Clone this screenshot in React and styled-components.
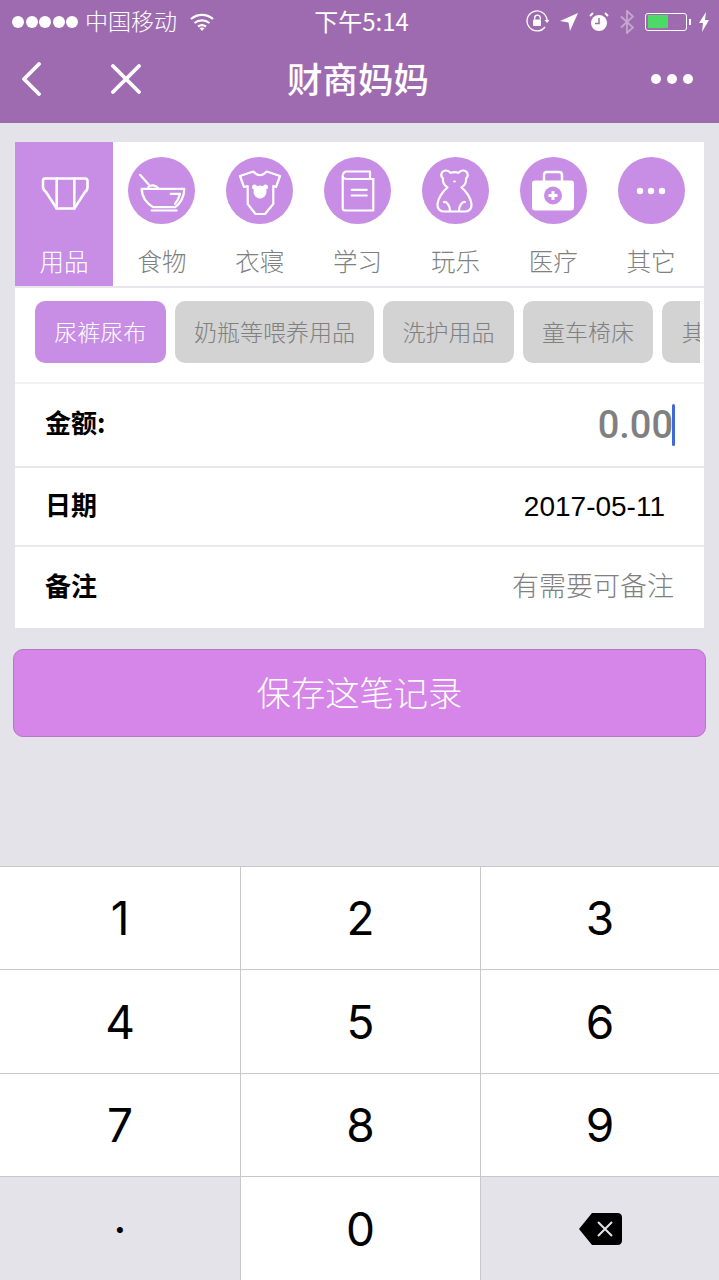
import React from "react";
import styled, { createGlobalStyle } from "styled-components";

const GlobalStyle = createGlobalStyle`
  html, body {
    margin: 0;
    padding: 0;
    background: #e4e3ea;
    font-family: "Noto Sans CJK SC", "Noto Sans", sans-serif;
  }
  * { box-sizing: border-box; }
`;

const Page = styled.div`
  width: 719px;
  height: 1280px;
  display: flex;
  flex-direction: column;
  overflow: hidden;
  background: #e4e3ea;
`;

const Header = styled.header`
  height: 123px;
  flex: none;
  background: #9f6bb0;
  color: #fff;
`;

const StatusBar = styled.div`
  height: 40px;
  display: grid;
  grid-template-columns: 1fr auto 1fr;
  align-items: center;
  padding: 0 10px 0 12px;
`;

const StatusLeft = styled.div`
  display: flex;
  align-items: center;
`;

const StatusRight = styled.div`
  display: flex;
  align-items: center;
  justify-content: flex-end;
  gap: 11px;
`;

const SignalDots = styled.div`
  display: flex;
  gap: 1.5px;
  margin-right: 7px;
`;

const SignalDot = styled.span`
  width: 12px;
  height: 12px;
  border-radius: 50%;
  background: #fff;
`;

const Carrier = styled.span`
  font-size: 23px;
  line-height: 40px;
  font-weight: 300;
  margin: 0 13px 3px 0;
`;

const Clock = styled.span`
  font-size: 24px;
  line-height: 40px;
  font-weight: 400;
  padding-left: 2px;
  margin-bottom: 1px;
`;

const BatteryGroup = styled.div`
  display: flex;
  align-items: center;
`;

const Battery = styled.div`
  width: 42px;
  height: 18px;
  border: 1.5px solid #fff;
  border-radius: 3px;
  padding: 1.5px;
  margin-right: 2px;
`;

const BatteryLevel = styled.div`
  height: 100%;
  width: 55%;
  background: #4cd964;
`;

const BatteryCap = styled.span`
  width: 2px;
  height: 6px;
  background: #fff;
  margin-right: 8px;
`;

const NavBar = styled.nav`
  height: 83px;
  display: grid;
  grid-template-columns: 1fr auto 1fr;
  align-items: center;
  padding: 0 26px 5px 21px;
`;

const NavLeft = styled.div`
  display: flex;
  align-items: center;
  gap: 70px;
`;

const NavTitle = styled.h1`
  margin: 0 0 3px;
  font-size: 35.5px;
  font-weight: 500;
  line-height: 1;
  position: relative;
  left: 1px;
`;

const NavRight = styled.div`
  display: flex;
  justify-content: flex-end;
  gap: 6px;
`;

const NavDot = styled.span`
  width: 10px;
  height: 10px;
  border-radius: 50%;
  background: #fff;
`;

const Main = styled.main`
  flex: 1;
  padding: 19px 15px 0;
`;

const Card = styled.section`
  background: #fff;
  display: flex;
  flex-direction: column;
`;

const Categories = styled.div`
  display: grid;
  grid-template-columns: 98px repeat(6, 97.83px);
  height: 146px;
  border-bottom: 2px solid #e6e6eb;
`;

const Category = styled.div`
  display: flex;
  flex-direction: column;
  align-items: center;
  padding-top: 15px;
  background: ${(p) => (p.$active ? "#c88de4" : "transparent")};
`;

const Circle = styled.div`
  width: 67px;
  height: 67px;
  border-radius: 50%;
  display: flex;
  align-items: center;
  justify-content: center;
  background: ${(p) => (p.$active ? "transparent" : "#c88de4")};
`;

const CategoryLabel = styled.span`
  margin-top: 19px;
  font-size: 24.5px;
  line-height: 36px;
  font-weight: 300;
  color: ${(p) => (p.$active ? "#fff" : "#808080")};
`;

const ChipRow = styled.div`
  height: 96px;
  padding: 13px 4px 0 20px;
  border-bottom: 2px solid #f1f1f4;
`;

const ChipScroller = styled.div`
  display: flex;
  gap: 9px;
  overflow: hidden;
`;

const Chip = styled.div`
  flex: none;
  height: 62px;
  padding: 0 19.3px;
  border-radius: 10px;
  font-size: 23px;
  font-weight: 300;
  line-height: 60px;
  white-space: nowrap;
  color: ${(p) => (p.$active ? "#fff" : "#808080")};
  background: ${(p) => (p.$active ? "#c88de4" : "#d3d3d3")};
`;

const FormRow = styled.div`
  height: ${(p) => p.$height}px;
  display: flex;
  align-items: center;
  justify-content: space-between;
  padding: 0 ${(p) => p.$right}px 0 30px;
  border-bottom: ${(p) => (p.$last ? "none" : "2px solid #e9e9ed")};
`;

const FormLabel = styled.span`
  font-size: 26px;
  font-weight: 700;
  color: #000;
  margin-bottom: 7px;
`;

const Amount = styled.div`
  display: flex;
  align-items: center;
  font-family: "Roboto", "Liberation Sans", sans-serif;
  font-size: 38px;
  font-weight: 500;
  color: #808080;
`;

const Caret = styled.span`
  width: 3px;
  height: 42px;
  margin-left: -1px;
  border-radius: 2px;
  background: #4169d8;
`;

const DateValue = styled.span`
  font-family: "Liberation Sans", sans-serif;
  font-size: 28px;
  color: #000;
`;

const Placeholder = styled.span`
  font-size: 27px;
  font-weight: 300;
  color: #808080;
  margin-bottom: 7px;
`;

const SaveButton = styled.button`
  display: block;
  width: 693px;
  height: 88px;
  margin: 21px 0 0 -2px;
  padding: 0 0 4px;
  border: 1px solid #b377c4;
  border-radius: 10px;
  background: #d685e8;
  color: #fff;
  font-family: inherit;
  font-size: 34.3px;
  font-weight: 300;
`;

const Keypad = styled.div`
  flex: none;
  height: 414px;
  display: grid;
  grid-template-columns: 241px 240px 238px;
  grid-template-rows: 103px 104px 103px 103px;
  border-top: 1px solid #c8c7cc;
`;

const Key = styled.div`
  display: flex;
  align-items: center;
  justify-content: center;
  font-family: "Inter", "Liberation Sans", sans-serif;
  font-size: 46px;
  color: #000;
  background: ${(p) => (p.$muted ? "#e4e3ea" : "#fff")};
  border-bottom: 1px solid #c8c7cc;
  border-right: ${(p) => (p.$end ? "none" : "1px solid #c8c7cc")};
  &:nth-child(n + 10) { border-bottom: none; }
`;

const Ic = ({ sw = 2.2, children }) => (
  <svg width={50} height={50} viewBox="0 0 50 50" fill="none" stroke="#fff" strokeWidth={sw} strokeLinecap="round" strokeLinejoin="round">
    {children}
  </svg>
);

const icons = {
  diaper: (
    <Ic sw={2.6}>
      <path d="M6 12.500H46c1.500 0 2.500 1 2.500 2.500v6c0 2-1 4-2.500 5L35.300 42.500H17.700L7 26c-1.500-1-3-3-3-5v-6c0-1.500.5-2.500 2-2.500z" />
      <path d="M17.700 12.500V42.500M35.300 12.500V42.500" />
    </Ic>
  ),
  bowl: (
    <Ic>
      <path d="M3 8.800L13 20" />
      <path d="M11.300 21c3-2.500 7-2.500 10 1.500" />
      <path d="M4.700 22.800H47.300C47.300 31 43 38 38 41.200H16.300C10 38 4.700 31 4.700 22.800z" />
      <path d="M33.700 27.800H43C42 32 40 35.500 38 37.800" />
      <path d="M14.700 44.500H39.700" />
    </Ic>
  ),
  onesie: (
    <Ic>
      <path d="M18.300 5.500Q25 13 31.700 5.500L45 10 41 21 38.300 20V38L30 48H20.500L12.700 38V20L9 21 5 10z" />
      <circle cx="25" cy="26" r="6.500" fill="#fff" stroke="none" />
      <circle cx="19.500" cy="21" r="2.500" fill="#fff" stroke="none" />
      <circle cx="30.500" cy="21" r="2.500" fill="#fff" stroke="none" />
    </Ic>
  ),
  book: (
    <Ic>
      <path d="M40.300 13V44.500H12C10.500 44.500 9.700 43.500 9.700 42V10C9.700 7 11.500 5.500 14 5.500H37V13" />
      <path d="M40.300 13H14C11.500 13 9.700 11.500 9.700 10" />
      <path d="M18.700 23.800H33.700M18.700 29.500H33.700" />
    </Ic>
  ),
  bear: (
    <Ic>
      <path d="M13 12.500C10 10 11 5 15.500 4.500 18 4.300 19.500 5.500 20.500 6.800 23 6 26 6 28.500 6.800 29.500 5.500 31 4.300 33.500 4.500 38 5 39 10 36 12.500 36.500 16 34.500 19.500 31.500 21.500 36 25 41 32 41.500 38 42 43 38.500 45.500 35 45.500H14C10.500 45.500 7 43 7.500 38 8 32 13 25 17.500 21.500 14.500 19.500 12.500 16 13 12.500Z" />
      <path d="M20 45C20 40 17 35.500 14 36M29 45C29 40 32 35.500 35 36" />
      <ellipse cx="24.500" cy="15.500" rx="1.500" ry="1" fill="#fff" stroke="none" />
    </Ic>
  ),
  medkit: (
    <Ic sw={2.5}>
      <path d="M16 14V9c0-2 1-3 3-3h12c2 0 3 1 3 3v5" />
      <rect x="4" y="14.500" width="42" height="30" rx="3" fill="#fff" stroke="none" />
      <circle cx="25" cy="29.500" r="9" fill="#c88de4" stroke="none" />
      <path d="M25 25v9M20.500 29.500h9" strokeWidth={3} strokeLinecap="butt" />
    </Ic>
  ),
  more: (
    <Ic>
      <circle cx="14" cy="25" r="3.200" fill="#fff" stroke="none" />
      <circle cx="25" cy="25" r="3.200" fill="#fff" stroke="none" />
      <circle cx="36" cy="25" r="3.200" fill="#fff" stroke="none" />
    </Ic>
  ),
};

const categories = [
  { label: "用品", icon: "diaper", active: true },
  { label: "食物", icon: "bowl" },
  { label: "衣寝", icon: "onesie" },
  { label: "学习", icon: "book" },
  { label: "玩乐", icon: "bear" },
  { label: "医疗", icon: "medkit" },
  { label: "其它", icon: "more" },
];

const chips = ["尿裤尿布", "奶瓶等喂养用品", "洗护用品", "童车椅床", "其它"];

const WifiIcon = () => (
  <svg width="24" height="18" viewBox="0 0 24 18" fill="none" stroke="#fff" strokeWidth="2.200">
    <path d="M1 6c6.500-5.500 15.500-5.500 22 0M4.500 10c4.500-3.500 10.500-3.500 15 0M8 13.500c2.500-1.700 5.500-1.700 8 0" />
    <path d="M12 18l-2.500-3c1.500-.8 3.500-.8 5 0z" fill="#fff" stroke="none" />
  </svg>
);

const RotationLockIcon = () => (
  <svg width="23" height="23" viewBox="0 0 23 23" fill="none" stroke="#fff" strokeWidth="1.300">
    <path d="M19 17A10 10 0 1 1 21 10" />
    <path d="M18.500 10h5l-2.500 3z" fill="#fff" stroke="none" />
    <rect x="7" y="9.500" width="8" height="6.500" rx="1" fill="#fff" stroke="none" />
    <path d="M8.700 9.500V8a2.800 2.800 0 0 1 5.600 0v1.500" />
  </svg>
);

const LocationIcon = () => (
  <svg width="18" height="18" viewBox="0 0 18 18">
    <path d="M18 0L0 8l8.500 1.500L10 18z" fill="#fff" />
  </svg>
);

const AlarmIcon = () => (
  <svg width="20" height="20" viewBox="0 0 20 20">
    <circle cx="10" cy="11" r="8" fill="#fff" />
    <path d="M10 6v5.500H6" stroke="#9f6bb0" strokeWidth="1.500" fill="none" />
    <path d="M1 4l3-3M19 4l-3-3" stroke="#fff" strokeWidth="1.800" fill="none" />
  </svg>
);

const BluetoothIcon = () => (
  <svg width="14" height="24" viewBox="0 0 14 24" fill="none" stroke="#c5a7cf" strokeWidth="1.800">
    <path d="M1 6.500l12 11L7 23V1l6 5.500-12 11" />
  </svg>
);

const BoltIcon = () => (
  <svg width="10" height="20" viewBox="0 0 10 20">
    <path d="M7 0L0 11h4l-1 9 7-12H6z" fill="#fff" />
  </svg>
);

const BackIcon = () => (
  <svg width="20" height="34" viewBox="0 0 20 34" fill="none" stroke="#fff" strokeWidth="3.800" strokeLinecap="round" strokeLinejoin="round">
    <path d="M18 2L3 17l15 15" />
  </svg>
);

const CloseIcon = () => (
  <svg width="30" height="30" viewBox="0 0 30 30" fill="none" stroke="#fff" strokeWidth="3.800" strokeLinecap="round">
    <path d="M2 2l26 26M28 2L2 28" />
  </svg>
);

const BackspaceIcon = () => (
  <svg width="44" height="32" viewBox="0 0 44 32">
    <path d="M14 0h26c2 0 4 2 4 4v24c0 2-2 4-4 4H14L1 16z" fill="#000" />
    <path d="M20 9l14 14M34 9L20 23" stroke="#e4e3ea" strokeWidth="2" fill="none" />
  </svg>
);

const keys = ["1", "2", "3", "4", "5", "6", "7", "8", "9"];

export default function App() {
  return (
    <Page>
      <GlobalStyle />
      <Header>
        <StatusBar>
          <StatusLeft>
            <SignalDots>
              {[0, 1, 2, 3, 4].map((i) => (
                <SignalDot key={i} />
              ))}
            </SignalDots>
            <Carrier>中国移动</Carrier>
            <WifiIcon />
          </StatusLeft>
          <Clock>下午5:14</Clock>
          <StatusRight>
            <RotationLockIcon />
            <LocationIcon />
            <AlarmIcon />
            <BluetoothIcon />
            <BatteryGroup>
              <Battery>
                <BatteryLevel />
              </Battery>
              <BatteryCap />
              <BoltIcon />
            </BatteryGroup>
          </StatusRight>
        </StatusBar>
        <NavBar>
          <NavLeft>
            <BackIcon />
            <CloseIcon />
          </NavLeft>
          <NavTitle>财商妈妈</NavTitle>
          <NavRight>
            <NavDot />
            <NavDot />
            <NavDot />
          </NavRight>
        </NavBar>
      </Header>

      <Main>
        <Card>
          <Categories>
            {categories.map((c) => (
              <Category key={c.label} $active={c.active}>
                <Circle $active={c.active}>{icons[c.icon]}</Circle>
                <CategoryLabel $active={c.active}>{c.label}</CategoryLabel>
              </Category>
            ))}
          </Categories>
          <ChipRow>
            <ChipScroller>
              {chips.map((c, i) => (
                <Chip key={c} $active={i === 0}>
                  {c}
                </Chip>
              ))}
            </ChipScroller>
          </ChipRow>
          <FormRow $height={84} $right={29}>
            <FormLabel>金额:</FormLabel>
            <Amount>
              0.00
              <Caret />
            </Amount>
          </FormRow>
          <FormRow $height={79} $right={39}>
            <FormLabel>日期</FormLabel>
            <DateValue>2017-05-11</DateValue>
          </FormRow>
          <FormRow $height={81} $right={30} $last>
            <FormLabel>备注</FormLabel>
            <Placeholder>有需要可备注</Placeholder>
          </FormRow>
        </Card>
        <SaveButton>保存这笔记录</SaveButton>
      </Main>

      <Keypad>
        {keys.map((k, i) => (
          <Key key={k} $end={i % 3 === 2}>
            {k}
          </Key>
        ))}
        <Key $muted>·</Key>
        <Key>0</Key>
        <Key $muted $end>
          <BackspaceIcon />
        </Key>
      </Keypad>
    </Page>
  );
}
